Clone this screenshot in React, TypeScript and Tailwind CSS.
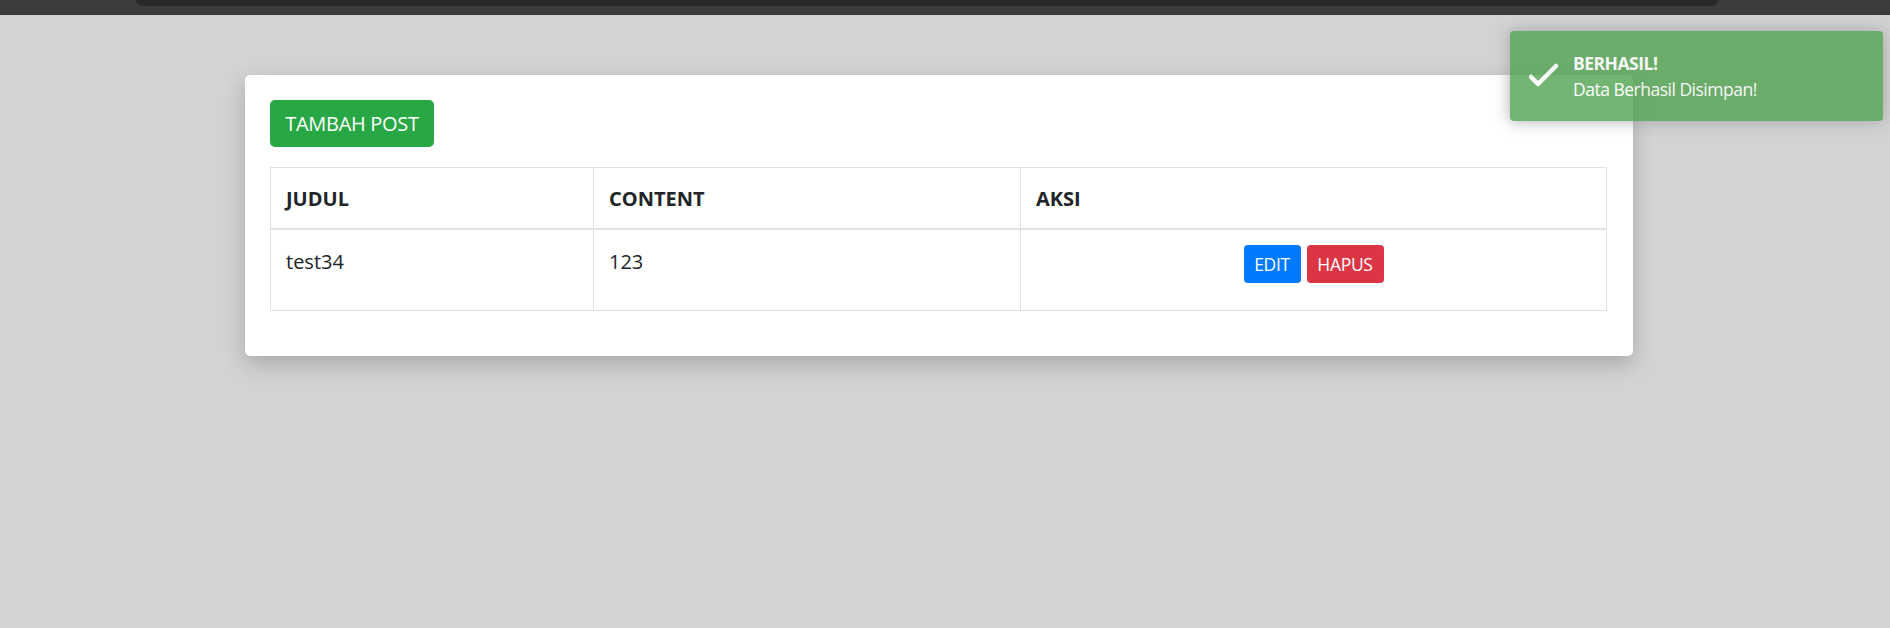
const font = "font-['Segoe_UI','Open_Sans',sans-serif]";

const CheckIcon = () => (
    <svg width="30" height="30" viewBox="0 0 30 30" fill="none">
        <path d="M2 16 L9 23 L27 5" stroke="white" strokeWidth="4.5" strokeLinecap="round" strokeLinejoin="round" />
    </svg>
);

const Toast = () => {
    return (
        <div className="absolute top-[31px] left-[1510px] w-[373px] h-[90px] rounded-[4px] bg-[#51a351] opacity-80 shadow-[0_0_15px_#999] text-white flex items-center">
            <div className="ml-[19px] w-[30px] h-[30px] flex items-center justify-center">
                <CheckIcon />
            </div>
            <div className="ml-[14px] text-[17.5px] leading-[26px] tracking-[-0.5px]">
                <p className="font-bold">BERHASIL!</p>
                <p>Data Berhasil Disimpan!</p>
            </div>
        </div>
    );
};

export default function App() {
    const posts = [{ judul: "test34", content: "123" }];

    return (
        <div className={`relative w-full h-[628px] bg-[#d3d3d3] text-[#212529] ${font}`}>
            {/* window chrome strip */}
            <div className="h-[15px] bg-[#3c3c3c]">
                <div className="ml-[136px] w-[1582px] h-[6px] bg-[#292929] rounded-b-[7px]" />
            </div>

            <div className="mt-[60px] ml-[245px] w-[1388px] bg-white rounded-[5px] shadow-[0_8px_22px_rgba(0,0,0,0.2)] p-[25px]">
                <button className="h-[47px] w-[164px] rounded-[5px] bg-[#28a745] text-white text-[20px] leading-[30px] tracking-[-0.3px]">
                    TAMBAH POST
                </button>

                <table className="mt-[20px] mb-[20px] w-[1337px] border-collapse text-[20px] leading-[30px]">
                    <thead>
                        <tr>
                            <th className="w-[323px] border border-[#dee2e6] border-b-2 px-[15px] pt-[16px] pb-[14px] text-left font-bold">JUDUL</th>
                            <th className="w-[427px] border border-[#dee2e6] border-b-2 px-[15px] pt-[16px] pb-[14px] text-left font-bold">CONTENT</th>
                            <th className="border border-[#dee2e6] border-b-2 px-[15px] pt-[16px] pb-[14px] text-left font-bold">AKSI</th>
                        </tr>
                    </thead>
                    <tbody>
                        {posts.map((p) => (
                            <tr key={p.judul} className="h-[81px]">
                                <td className="border border-[#dee2e6] px-[15px] pt-[17px] pb-[13px] align-top">{p.judul}</td>
                                <td className="border border-[#dee2e6] px-[15px] pt-[17px] pb-[13px] align-top">{p.content}</td>
                                <td className="border border-[#dee2e6] px-[15px] py-[15px] align-top">
                                    <div className="flex justify-center gap-[6px] text-[17.5px] text-white tracking-[-0.3px]">
                                        <button className="h-[38px] w-[57px] rounded-[4px] bg-[#007bff]">EDIT</button>
                                        <button className="h-[38px] w-[77px] rounded-[4px] bg-[#dc3545]">HAPUS</button>
                                    </div>
                                </td>
                            </tr>
                        ))}
                    </tbody>
                </table>
            </div>

            <Toast />
        </div>
    );
}
